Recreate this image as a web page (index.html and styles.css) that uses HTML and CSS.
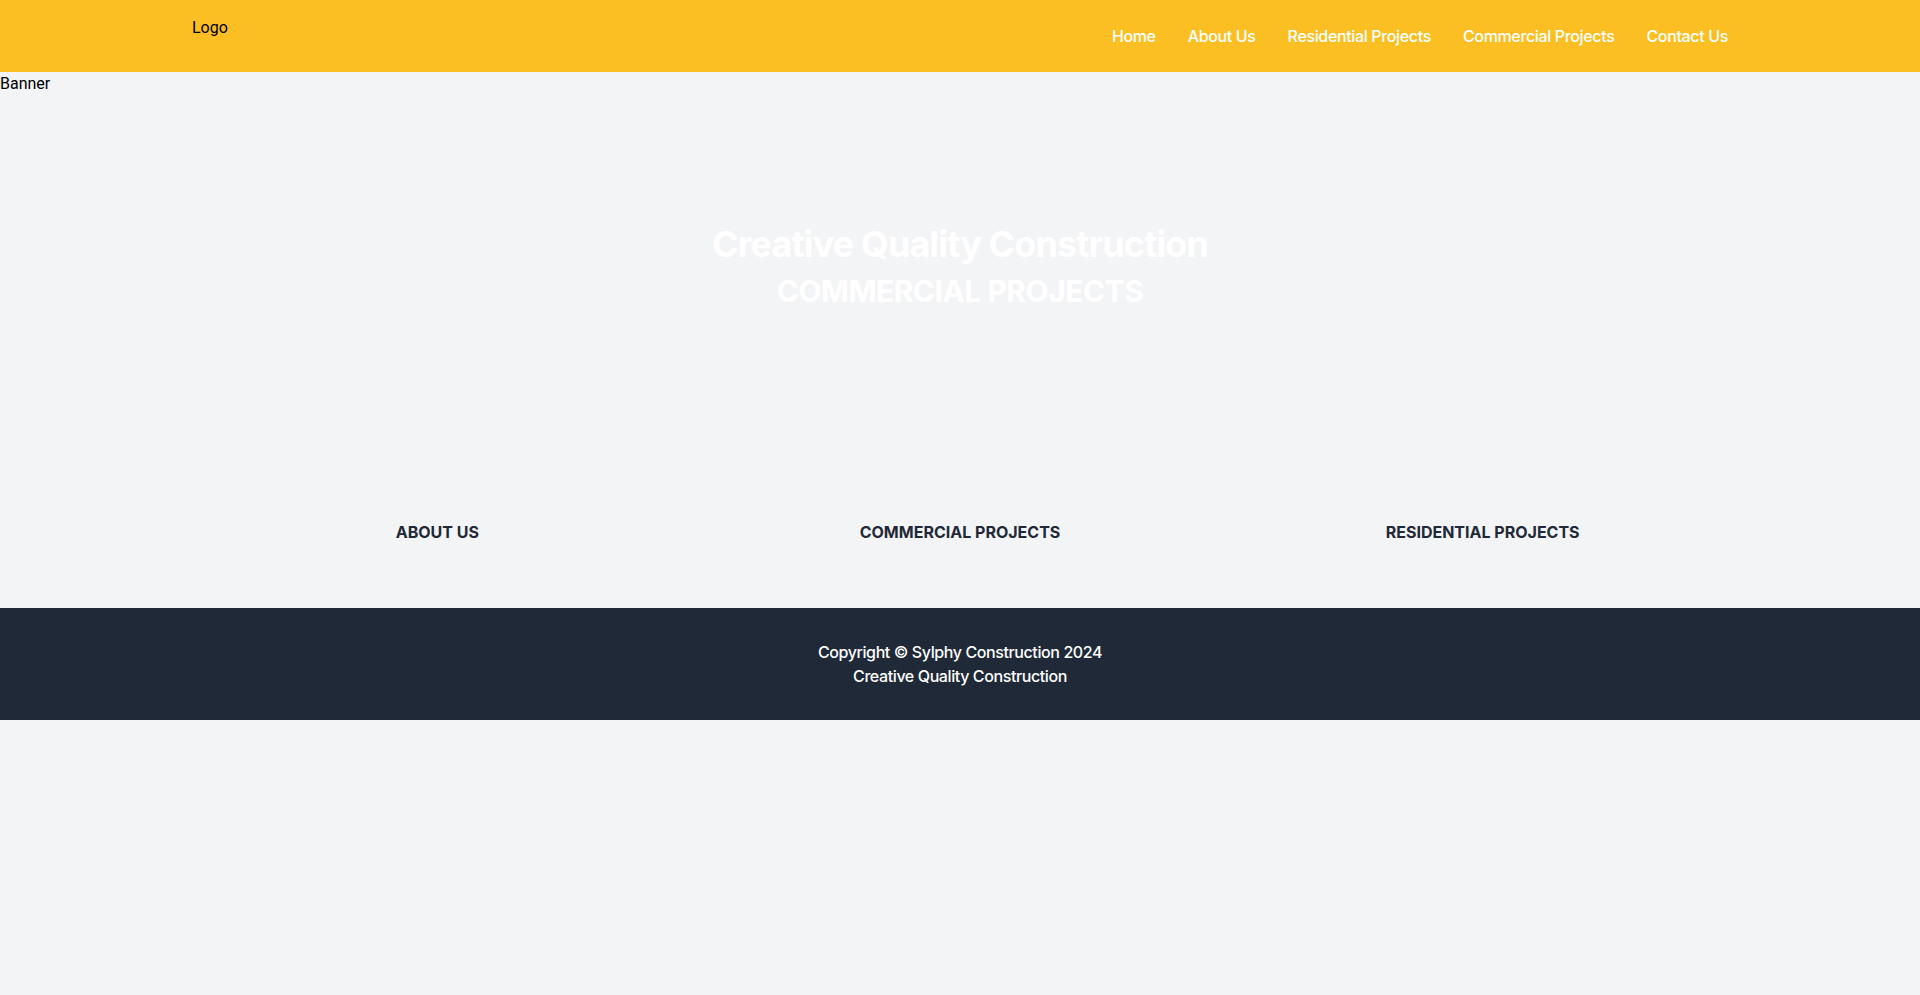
FILE: index.html
```html
<!DOCTYPE html>
<html lang="en">
<head>
<meta charset="utf-8">
<title>Sylphy Construction - Commercial Projects</title>
<link rel="stylesheet" href="styles.css">
</head>
<body>
  <header class="site-header">
    <div class="container header-inner">
      <div class="logo">Logo</div>
      <nav class="nav">
        <a href="#">Home</a>
        <a href="#">About Us</a>
        <a href="#">Residential Projects</a>
        <a href="#">Commercial Projects</a>
        <a href="#">Contact Us</a>
      </nav>
    </div>
  </header>

  <section class="hero">
    <div class="banner-alt">Banner</div>
    <div class="hero-overlay">
      <h1 class="hero-title">Creative Quality Construction</h1>
      <h2 class="hero-sub">COMMERCIAL PROJECTS</h2>
    </div>
  </section>

  <section class="links">
    <div class="container links-grid">
      <div class="link-item">ABOUT US</div>
      <div class="link-item">COMMERCIAL PROJECTS</div>
      <div class="link-item">RESIDENTIAL PROJECTS</div>
    </div>
  </section>

  <footer class="site-footer">
    <p>Copyright © Sylphy Construction 2024</p>
    <p>Creative Quality Construction</p>
  </footer>
</body>
</html>
```

FILE: styles.css
```css
* { box-sizing: border-box; }

html, body {
  margin: 0;
  padding: 0;
}

body {
  background: #f3f4f6;
  font-family: Inter, "Liberation Sans", sans-serif;
  font-size: 16px;
  line-height: 24px;
  color: #000;
  min-height: 995px;
}

.container {
  max-width: 1536px;
  margin: 0 auto;
}

.site-header {
  background: #fbbf24;
  height: 72px;
}

.header-inner {
  display: flex;
  justify-content: space-between;
  align-items: flex-start;
  height: 72px;
}

.logo {
  padding-top: 16px;
  font-family: Roboto, Inter, sans-serif;
  font-size: 16px;
  line-height: 24px;
}

.nav {
  display: flex;
  gap: 32px;
  align-self: center;
}

.nav a {
  color: #fff;
  text-decoration: none;
  font-weight: 500;
  font-size: 16px;
  line-height: 24px;
  letter-spacing: -0.35px;
}

.hero {
  position: relative;
  height: 384px;
}

.banner-alt {
  font-family: Roboto, Inter, sans-serif;
  line-height: 24px;
}

.hero-overlay {
  position: absolute;
  inset: 0;
  padding-top: 4px;
  display: flex;
  flex-direction: column;
  align-items: center;
  justify-content: center;
  color: #fff;
  text-align: center;
}

.hero-title {
  margin: 0;
  font-size: 36px;
  line-height: 40px;
  font-weight: 700;
  letter-spacing: -0.9px;
}

.hero-sub {
  margin: 9px 0 0;
  font-size: 30px;
  line-height: 36px;
  font-weight: 700;
  letter-spacing: -0.5px;
}

.links {
  padding: 64px 0;
}

.links-grid {
  display: grid;
  grid-template-columns: repeat(3, 1fr);
  gap: 32px;
}

.link-item {
  text-align: center;
  font-weight: 700;
  color: #1f2937;
  line-height: 24px;
}

.site-footer {
  background: #1f2937;
  color: #fff;
  text-align: center;
  padding: 32px 0;
  font-weight: 500;
}

.site-footer p {
  margin: 0;
  line-height: 24px;
  letter-spacing: -0.4px;
}
```
